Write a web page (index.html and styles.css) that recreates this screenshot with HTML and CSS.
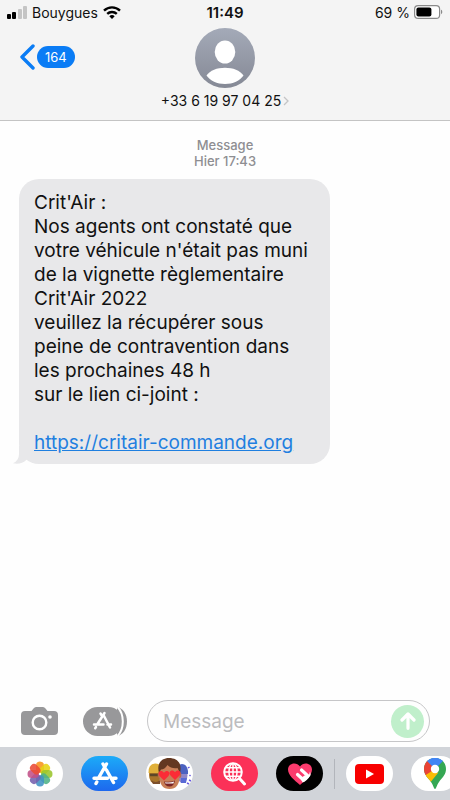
FILE: index.html
```html
<!DOCTYPE html>
<html lang="fr">
<head>
<meta charset="UTF-8">
<meta name="viewport" content="width=device-width, initial-scale=1.0">
<title>Messages</title>
<link rel="stylesheet" href="styles.css">
</head>
<body>
<header class="top">
    <div class="status">
        <div class="status-left">
            <svg width="20" height="13" viewBox="0 0 20 13">
                <rect x="0" y="8" width="4" height="5" rx="1" fill="#000"/>
                <rect x="5" y="6" width="4" height="7" rx="1" fill="#000"/>
                <rect x="11" y="3" width="4" height="10" rx="1" fill="#c4c4c4"/>
                <rect x="16" y="0" width="4" height="13" rx="1" fill="#c4c4c4"/>
            </svg>
            <span>Bouygues</span>
            <svg width="18" height="13" viewBox="0 0 18 13" fill="none" stroke="#000" stroke-width="2.4">
                <path d="M1 4.6a11.5 11.5 0 0 1 16 0"/>
                <path d="M4.2 7.9a7 7 0 0 1 9.6 0"/>
                <path d="M9 13L6.3 10.2a4 4 0 0 1 5.4 0z" fill="#000" stroke="none"/>
            </svg>
        </div>
        <div class="clock">11:49</div>
        <div class="status-right">
            <span>69 %</span>
            <svg width="29" height="14" viewBox="0 0 29 14">
                <rect x="0.6" y="0.6" width="25" height="12.8" rx="3.5" fill="#fff" stroke="#8a8a8a" stroke-width="1.2"/>
                <rect x="2.4" y="2.4" width="15" height="9.2" rx="2" fill="#000"/>
                <path d="M27 4.8c1.7.6 1.7 3.8 0 4.4z" fill="#8a8a8a"/>
            </svg>
        </div>
    </div>
    <div class="nav">
        <button class="back" aria-label="Retour">
            <svg width="15" height="26" viewBox="0 0 15 26" fill="none" stroke="#0a7cf5" stroke-width="3.4" stroke-linecap="round" stroke-linejoin="round"><path d="M13 2L2 13l11 11"/></svg>
            <span class="count">164</span>
        </button>
        <button class="contact">
            <svg width="60" height="60" viewBox="0 0 60 60">
                <defs>
                    <linearGradient id="grey" x1="0" y1="0" x2="0" y2="1"><stop offset="0" stop-color="#a4aab8"/><stop offset="1" stop-color="#858995"/></linearGradient>
                </defs>
                <circle cx="30" cy="30" r="30" fill="url(#grey)"/>
                <ellipse cx="30" cy="24" rx="10.3" ry="11.5" fill="#fff"/>
                <path d="M11.5 47.5C15 42.500 22 39.800 30 39.800s15 2.700 18.500 7.700C45 52.500 38 56 30 56s-15-3.500-18.500-8.500z" fill="#fff"/>
            </svg>
            <span class="number">+33 6 19 97 04 25
                <svg width="6" height="10" viewBox="0 0 6 10" fill="none" stroke="#c4c4c6" stroke-width="1.3"><path d="M1 1l4 4-4 4"/></svg>
            </span>
        </button>
    </div>
</header>

<main class="thread">
    <p class="stamp">Message<br>Hier 17:43</p>
    <div class="bubble">
        <p>Crit'Air :<br>
        Nos agents ont constaté que<br>
        votre véhicule n'était pas muni<br>
        de la vignette règlementaire<br>
        Crit'Air 2022<br>
        veuillez la récupérer sous<br>
        peine de contravention dans<br>
        les prochaines 48 h<br>
        sur le lien ci-joint :<br>
        <br>
        <a href="#">https://critair-commande.org</a></p>
        <svg class="tail" width="20" height="18" viewBox="0 0 20 18"><path d="M6 0v8c0 4-2 7.500-6 9.300 5 1.200 10 0 13-3L20 8V0z" fill="#e8e8ea"/></svg>
    </div>
</main>

<form class="composer">
    <button type="button" class="tool" aria-label="Appareil photo">
        <svg width="37" height="28" viewBox="0 0 37 28">
            <path d="M4 4h6.500l2-2.500Q13.500 0 15 0h7q1.500 0 2.500 1.500l2 2.500H33q4 0 4 4v16q0 4-4 4H4q-4 0-4-4V8q0-4 4-4z" fill="#98989a"/>
            <circle cx="18.500" cy="15.500" r="6.800" fill="none" stroke="#fff" stroke-width="2.400"/>
            <circle cx="29" cy="10" r="1.800" fill="#fff"/>
        </svg>
    </button>
    <button type="button" class="tool" aria-label="Apps">
        <svg width="44" height="29" viewBox="0 0 44 29">
            <path d="M34 0c6 1 10 7 10 14.500S40 28 34 29z" fill="#98989a"/>
            <rect x="0" y="0" width="40" height="29" rx="14.500" fill="#98989a"/>
            <path d="M34.500 0c3.500 3.500 5.300 8 5.300 14.500s-1.800 11-5.300 14.500" fill="none" stroke="#fff" stroke-width="2"/>
            <g fill="none" stroke="#fff" stroke-width="2.500" stroke-linecap="round">
                <path d="M20.500 8l6.500 12.500M17.500 6.500l1.500 2.500M21.500 6L14.500 17M11 17.500h9.500M24.500 17.500h3.500M13 20l-.8 1.200"/>
            </g>
        </svg>
    </button>
    <div class="field">
        <input type="text" placeholder="Message" aria-label="Message">
        <button type="button" class="send" aria-label="Envoyer">
            <svg width="16" height="18" viewBox="0 0 16 18" fill="none" stroke="#fff" stroke-width="3.200" stroke-linecap="round" stroke-linejoin="round"><path d="M8 16.300V2M2 8l6-6 6 6"/></svg>
        </button>
    </div>
</form>

<nav class="apps">
    <button class="app" aria-label="Photos">
        <svg width="26" height="26" viewBox="-13 -13 26 26">
            <g fill-opacity="0.88">
                <rect x="-4" y="-12.500" width="8" height="11.500" rx="4" fill="#f7941d"/>
                <rect x="-4" y="-12.500" width="8" height="11.500" rx="4" fill="#e6d313" transform="rotate(45)"/>
                <rect x="-4" y="-12.500" width="8" height="11.500" rx="4" fill="#9ac52c" transform="rotate(90)"/>
                <rect x="-4" y="-12.500" width="8" height="11.500" rx="4" fill="#4fb286" transform="rotate(135)"/>
                <rect x="-4" y="-12.500" width="8" height="11.500" rx="4" fill="#4192c4" transform="rotate(180)"/>
                <rect x="-4" y="-12.500" width="8" height="11.500" rx="4" fill="#7560ae" transform="rotate(225)"/>
                <rect x="-4" y="-12.500" width="8" height="11.500" rx="4" fill="#c25088" transform="rotate(270)"/>
                <rect x="-4" y="-12.500" width="8" height="11.500" rx="4" fill="#ea4b35" transform="rotate(315)"/>
            </g>
            <circle r="1.200" fill="#fff"/>
        </svg>
    </button>
    <button class="app store" aria-label="App Store">
        <svg width="26" height="24" viewBox="0 0 26 24" fill="none" stroke="#fff" stroke-width="3.400" stroke-linecap="round">
            <path d="M14.500 2L6.500 16M11 2l2 3.500M14.500 8l7 12.500M2 16.200h13.500M20.500 16.200H24M4.800 20l-.8 1.500"/>
        </svg>
    </button>
    <button class="app" aria-label="Memoji">
        <svg width="47" height="35" viewBox="0 0 47 35">
            <ellipse cx="9" cy="19" rx="6" ry="9" fill="#a8742a"/>
            <path d="M2.500 17q-.5-9 6.500-9.500t6 9.500z" fill="#e0b03a"/>
            <path d="M4 19h8" stroke="#5c4728" stroke-width="2.500"/>
            <path d="M5 24q5 4 9 0v4H7z" fill="#7c4f2c"/>
            <ellipse cx="36.500" cy="19" rx="5" ry="8" fill="#8f86c8"/>
            <path d="M31 16q0-8 5-8t6 7v3H31z" fill="#4c62c0"/>
            <path d="M35 22h6l-1 5h-5z" fill="#5969d5"/>
            <path d="M42 12l1.500-1M43.500 20l1-1M43 24l2 1M41 27l2 1" stroke="#6a5be0" stroke-width="1.500"/>
            <ellipse cx="13.500" cy="19" rx="1.800" ry="3" fill="#b96a48"/>
            <ellipse cx="33.500" cy="19" rx="1.800" ry="3" fill="#b96a48"/>
            <path d="M13.500 14q0-10 10-10t10 10v6q0 13-10 13t-10-13z" fill="#c98058"/>
            <path d="M13 17C10.500 8 15 2 23 2s13.500 5 11 15l-2.500-5q-6 1-10-3-3 4.500-6.500 4.500z" fill="#633821"/>
            <path d="M18 25.500q6 1 11-1-1 6-5.500 6T18 25.500z" fill="#7a2525"/>
            <path d="M19 26.200q5 1 9-.8l-.5 2h-8z" fill="#fff"/>
            <path d="M18 24.500l-4.500-4.500c-3-4 2-7 4.500-3.300 2.500-3.700 7.500-.7 4.500 3.300zM29 24l-4.500-4.500c-3-4 2-7 4.500-3.300 2.500-3.700 7.500-.7 4.500 3.300z" fill="#fb2c36"/>
        </svg>
    </button>
    <button class="app search" aria-label="#images">
        <svg width="24" height="24" viewBox="0 0 24 24" fill="none" stroke="#fff" stroke-width="1.500" stroke-linecap="round">
            <circle cx="10" cy="10" r="8.800" stroke-width="2"/>
            <ellipse cx="10" cy="10" rx="4" ry="8.500"/>
            <path d="M2 10h16M3.500 5.800h13M3.500 14.200h13M10 2v16"/>
            <path d="M16.500 16.500L21.500 22" stroke-width="3"/>
        </svg>
    </button>
    <button class="app touch" aria-label="Digital Touch">
        <svg width="26" height="24" viewBox="0 0 26 24">
            <path d="M13 23C7 18 1 13 1 7.500 1 1 9.500-.8 13 4.500 16.500-.8 25 1 25 7.500 25 13 19 18 13 23z" fill="#fb3b6d"/>
            <path d="M10.500 12.500l6 5.500M14.500 8l6.500 6" stroke="#fff" stroke-width="3.200" stroke-linecap="round"/>
            <path d="M13.500 16.500l4-3 4.500-.5 1-3.500.7 3.500q-3.700 6-8 7.500z" fill="#fff"/>
        </svg>
    </button>
    <span class="divider"></span>
    <button class="app" aria-label="YouTube">
        <svg width="29" height="20" viewBox="0 0 29 20"><rect width="29" height="20" rx="4" fill="#f80000"/><path d="M11 5.500l8 4.500-8 4.500z" fill="#fff"/></svg>
    </button>
    <button class="app" aria-label="Google Maps">
        <svg width="22" height="31" viewBox="0 0 22 31">
            <defs>
                <clipPath id="pin"><path d="M11 0C4.500 0 0 5 0 11c0 5 3 8 6 11.500 2 2.500 3 5 4 7.500q1 2 2 0c1-2.500 2-5 4-7.500 3-3.500 6-6.500 6-11.500C22 5 17.500 0 11 0z"/></clipPath>
            </defs>
            <g clip-path="url(#pin)">
                <rect width="22" height="31" fill="#35a753"/>
                <path d="M3 3L9-3h16l-14 14z" fill="#4285f4"/>
                <path d="M-1 2l4 0 8 9-8 8-5-6z" fill="#ea4335"/>
                <path d="M11 11l3 4-9 11-7-7 3-1.500z" fill="#fbbc04"/>
                <path d="M11 11L19 2l-1-5H5L3 3z" fill="#4285f4"/>
            </g>
            <circle cx="11" cy="11" r="4.200" fill="#fff"/>
        </svg>
    </button>
</nav>
</body>
</html>
```
FILE: styles.css
```css
* {
    box-sizing: border-box;
}
body {
    margin: 0;
    min-height: 100vh;
    display: flex;
    flex-direction: column;
    background: #fefefe;
    color: #111;
    font-family: Inter, "Liberation Sans", sans-serif;
    overflow-x: hidden;
}
button {
    font: inherit;
    color: inherit;
    border: 0;
    padding: 0;
    background: none;
    cursor: pointer;
}
svg {
    display: block;
    flex: none;
}
p {
    margin: 0;
}

.top {
    background: #f4f4f4;
    border-bottom: 1px solid #c4c4c4;
    padding-bottom: 10px;
}
.status {
    display: grid;
    grid-template-columns: 1fr auto 1fr;
    align-items: center;
    height: 24px;
    padding: 0 7px;
    font-size: 14px;
}
.status-left, .status-right {
    display: flex;
    align-items: center;
    gap: 5px;
}
.status-right {
    justify-content: flex-end;
    gap: 4px;
}
.clock {
    font-weight: 600;
    font-size: 15px;
}
.nav {
    display: grid;
    grid-template-columns: 1fr auto 1fr;
    align-items: start;
    padding: 4px 20px 0;
}
.back {
    display: flex;
    align-items: center;
    justify-self: start;
    gap: 2px;
    margin-top: 16px;
}
.count {
    background: #0a7cf5;
    color: #fff;
    border-radius: 11px;
    padding: 0 8px;
    font-size: 13px;
    line-height: 22px;
}
.contact {
    display: flex;
    flex-direction: column;
    align-items: center;
    gap: 4px;
}
.number {
    display: flex;
    align-items: center;
    gap: 2px;
    font-size: 14px;
    line-height: 18px;
}

.thread {
    flex: 1;
    padding: 16px 19px;
}
.stamp {
    text-align: center;
    color: #8e8e92;
    font-size: 13px;
    font-weight: 500;
    line-height: 16px;
}
.bubble {
    position: relative;
    width: 75%;
    min-width: 311px;
    margin-top: 10px;
    padding: 12px 15px 9px;
    border-radius: 20px;
    background: #e8e8ea;
    font-size: 19px;
    line-height: 24px;
    white-space: nowrap;
}
.bubble a {
    color: #1f7fe0;
}
.tail {
    position: absolute;
    left: -6px;
    bottom: 0;
}

.composer {
    display: flex;
    align-items: center;
    padding: 0 20px 5px 21px;
}
.tool {
    margin-right: 25px;
}
.tool + .tool {
    margin-right: 20px;
}
.field {
    flex: 1;
    min-width: 0;
    display: flex;
    align-items: center;
    height: 42px;
    padding: 0 5px 0 15px;
    border: 1px solid #c6c6c8;
    border-radius: 21px;
}
.field input {
    flex: 1;
    min-width: 0;
    border: 0;
    padding: 0;
    outline: none;
    background: none;
    font: inherit;
    font-size: 19px;
}
.field input::placeholder {
    color: #bcbcbe;
}
.send {
    width: 33px;
    height: 33px;
    border-radius: 50%;
    background: #c0efcb;
    display: grid;
    place-items: center;
}

.apps {
    display: flex;
    align-items: center;
    gap: 18px;
    height: 53px;
    padding: 0 16px;
    background: #d1d4d9;
    overflow: hidden;
}
.app {
    flex: none;
    display: grid;
    place-items: center;
    width: 47px;
    height: 35px;
    border-radius: 18px;
    background: #fff;
    overflow: hidden;
}
.store {
    background: linear-gradient(#1cabf8, #1d68ee);
}
.search {
    background: #fb3158;
}
.touch {
    background: #000;
}
.divider {
    flex: none;
    width: 1px;
    height: 30px;
    margin: 0 -7px;
    background: #b2b5bb;
}
```
